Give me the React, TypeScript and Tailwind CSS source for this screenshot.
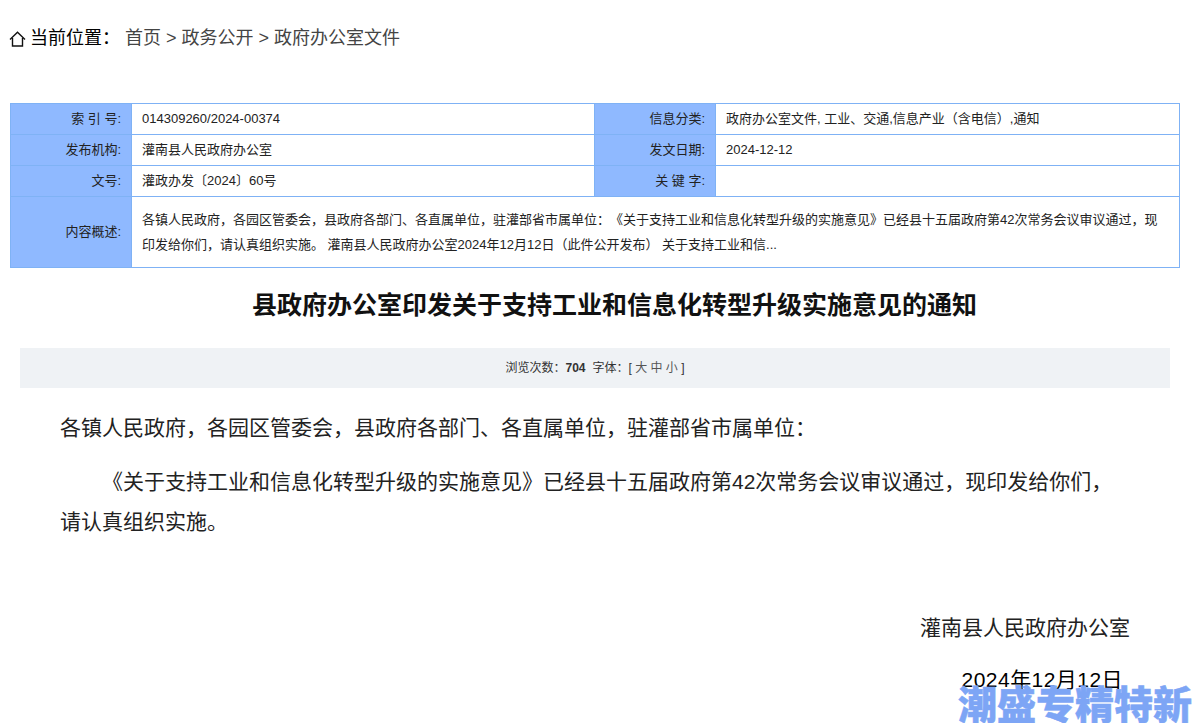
const labelCell = 'border border-[#7fb2f5] bg-[#8fb9ff] pr-[10px] text-right text-[#222]';
const valueCell = 'border border-[#7fb2f5] bg-white pl-2.5 text-[#222]';

function HomeIcon() {
  return (
    <svg width="17" height="16" viewBox="0 0 17 16" fill="none" stroke="#111" strokeWidth="1.4" className="mr-[4px]">
      <path d="M1 8.5 L8.5 1.2 L16 8.5" />
      <path d="M3.5 7 V15 H13.5 V7" />
    </svg>
  );
}

function App() {
  return (
    <div
      className="relative h-[723px] overflow-hidden bg-white text-[#222] [text-spacing-trim:space-all]"
      style={{ fontFamily: '"Liberation Sans", "Noto Sans CJK SC", sans-serif' }}
    >
      <div className="flex h-[74px] items-center pt-[3px] pl-[9px] text-[18px]">
        <HomeIcon />
        <span className="text-black">当前位置：</span>
        <span className="ml-[5px] text-[#444]">首页 &gt; 政务公开 &gt; 政府办公室文件</span>
      </div>

      <div className="px-2.5 pt-[29px]">
        <table className="w-[1170px] table-fixed border-collapse text-[13px]">
          <colgroup>
            <col className="w-[121px]" />
            <col className="w-[463px]" />
            <col className="w-[121px]" />
            <col />
          </colgroup>
          <tbody>
            <tr className="h-[31px]">
              <td className={labelCell}>索 引 号:</td>
              <td className={valueCell}>014309260/2024-00374</td>
              <td className={labelCell}>信息分类:</td>
              <td className={valueCell}>政府办公室文件, 工业、交通,信息产业（含电信）,通知</td>
            </tr>
            <tr className="h-[31px]">
              <td className={labelCell}>发布机构:</td>
              <td className={valueCell}>灌南县人民政府办公室</td>
              <td className={labelCell}>发文日期:</td>
              <td className={valueCell}>2024-12-12</td>
            </tr>
            <tr className="h-[31px]">
              <td className={labelCell}>文号:</td>
              <td className={valueCell}>灌政办发〔2024〕60号</td>
              <td className={labelCell}>关 键 字:</td>
              <td className={valueCell}></td>
            </tr>
            <tr className="h-[71px]">
              <td className={labelCell}>内容概述:</td>
              <td colSpan={3} className={`${valueCell} pr-5 leading-[25.5px]`}>
                各镇人民政府，各园区管委会，县政府各部门、各直属单位，驻灌部省市属单位：《关于支持工业和信息化转型升级的实施意见》已经县十五届政府第42次常务会议审议通过，现印发给你们，请认真组织实施。 灌南县人民政府办公室2024年12月12日（此件公开发布） 关于支持工业和信...
              </td>
            </tr>
          </tbody>
        </table>
      </div>

      <h1 className="mt-[21px] pl-[37px] text-center text-[25px] leading-[32px] font-bold text-[#111]">
        县政府办公室印发关于支持工业和信息化转型升级实施意见的通知
      </h1>

      <div className="mx-5 mt-[27px] flex h-10 w-[1150px] items-center justify-center bg-[#eff2f5] text-[12px] text-[#333]">
        <span>浏览次数：</span>
        <span className="font-bold">704</span>
        <span className="ml-[7px]">字体：</span>
        <span>
          [ <span className="text-[#555]">大 中 小</span> ]
        </span>
      </div>

      <div className="pt-[20px] pr-[62px] pl-[60px] text-[21px] leading-[40px] text-[#222]">
        <p>各镇人民政府，各园区管委会，县政府各部门、各直属单位，驻灌部省市属单位：</p>
        <p className="mt-[14px] w-[1060px] indent-[42px]">
          《关于支持工业和信息化转型升级的实施意见》已经县十五届政府第42次常务会议审议通过，现印发给你们，请认真组织实施。
        </p>
        <p className="mt-[66px] text-right">灌南县人民政府办公室</p>
        <p className="mt-[12px] pr-[7px] text-right tracking-[0.45px] text-black">2024年12月12日</p>
      </div>

      <div className="absolute right-0 -bottom-[6px] text-[39px] leading-[46px] font-black whitespace-nowrap text-[#7da5f5] [-webkit-text-stroke:0.5px_#7da5f5]">
        潮盛专精特新
      </div>
    </div>
  );
}

export default App;
